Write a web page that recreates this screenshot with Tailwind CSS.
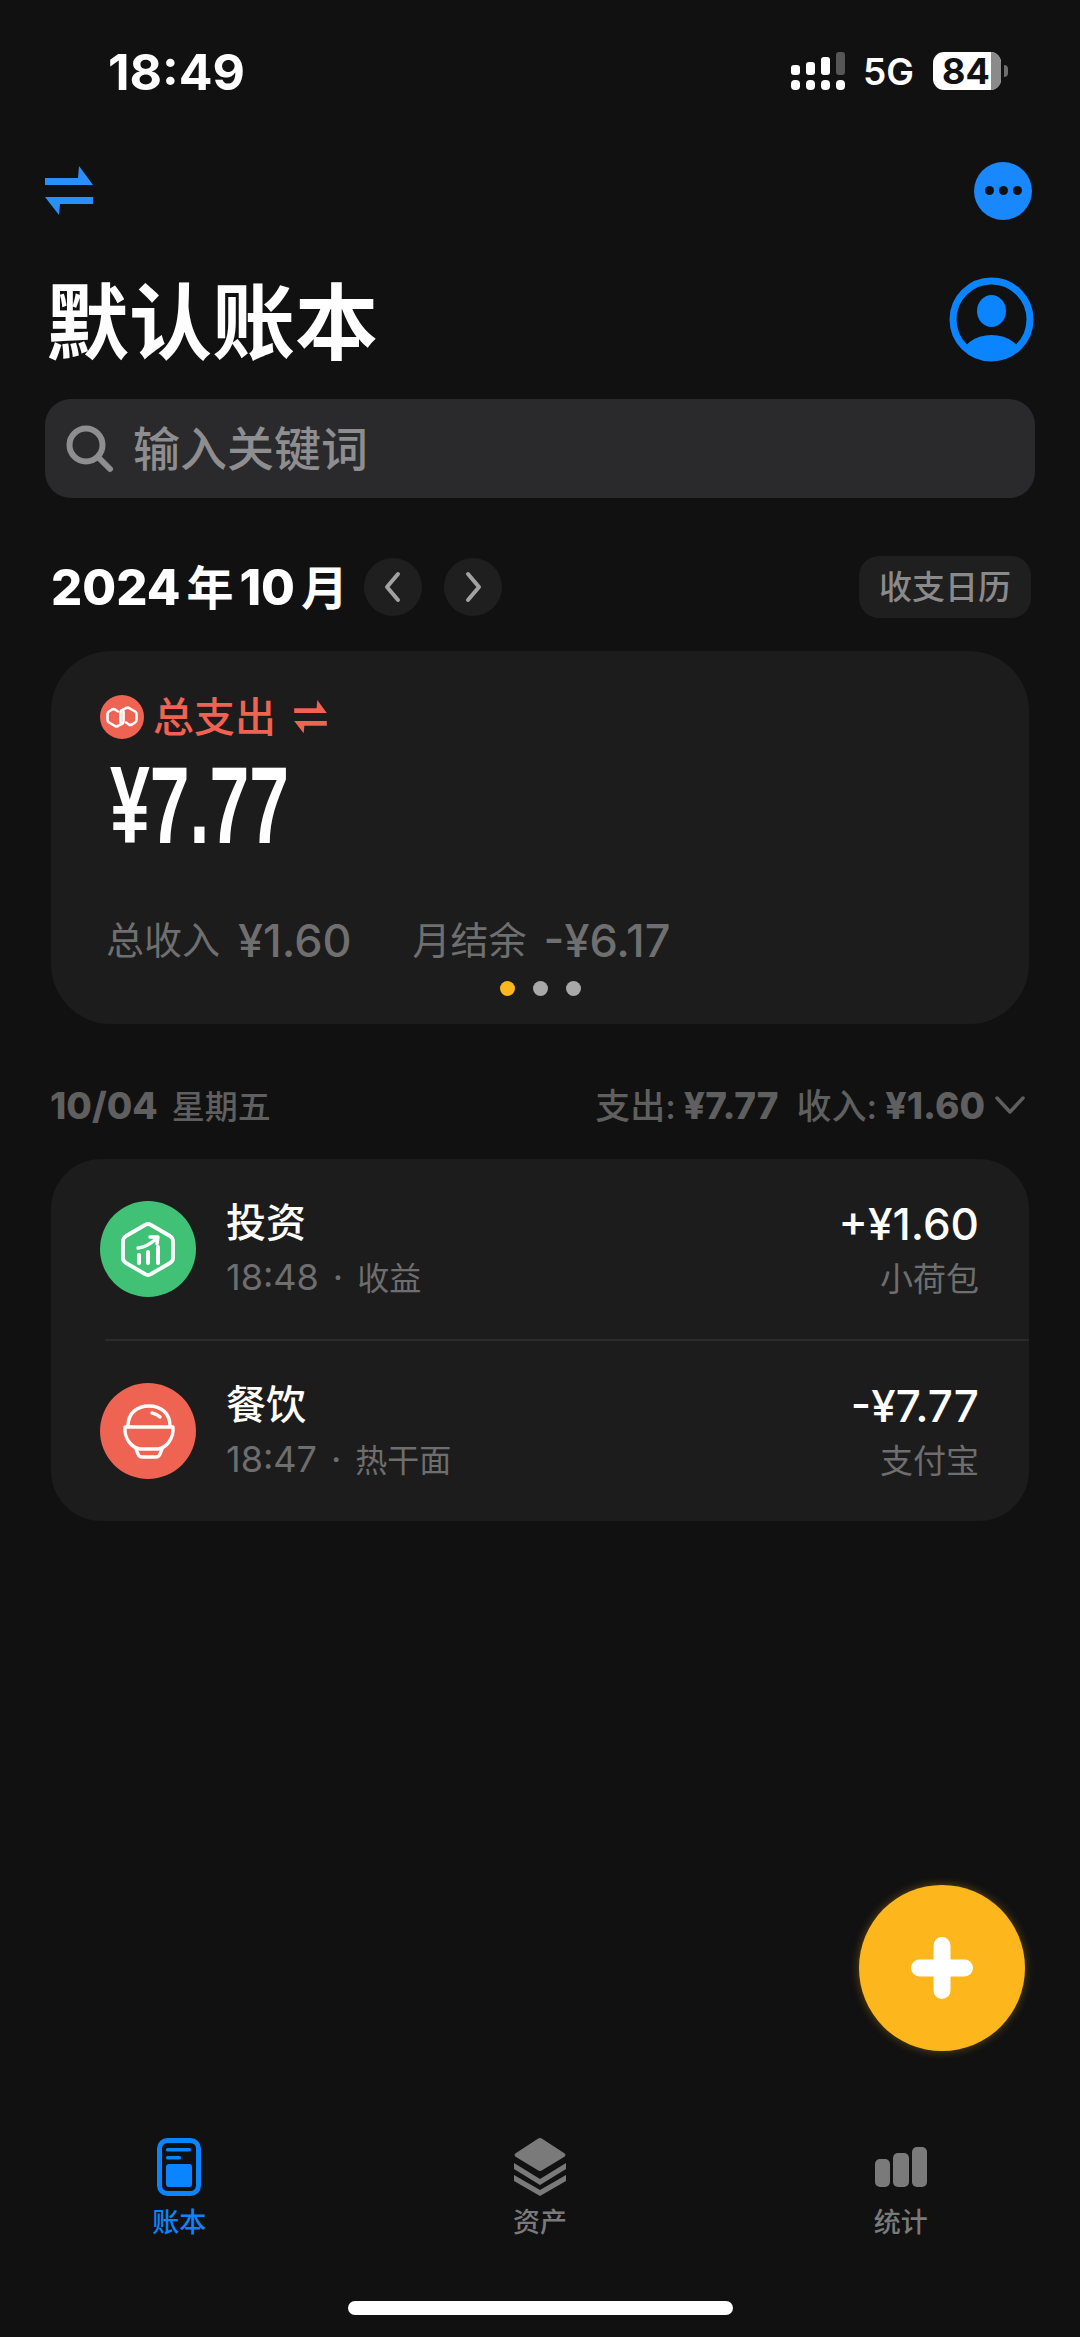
<!doctype html>
<html lang="zh-CN"><head><meta charset="utf-8">
<script src="https://cdn.jsdelivr.net/npm/@tailwindcss/browser@4"></script>
</head>
<body class="m-0">
<div class="relative w-[1080px] h-[2337px] overflow-hidden bg-[#111112] font-['Inter','Noto_Sans_CJK_SC',sans-serif] text-white flex flex-col">

  <!-- status bar -->
  <div class="h-[38px] mt-[52px] pl-[108px] pr-[72px] flex items-center justify-between">
    <span class="pt-[2px] text-[50px] font-bold leading-none">18:49</span>
    <div class="flex items-center">
      <svg width="54" height="38" viewBox="0 0 54 38" fill="#fff">
        <rect x="0" y="13" width="9" height="10" rx="3"/><rect x="15" y="10" width="9" height="13" rx="3"/><rect x="30" y="5" width="9" height="18" rx="3"/><rect x="45" y="0" width="9" height="23" rx="3" fill="#565656"/>
        <rect x="0" y="28" width="9" height="10" rx="4"/><rect x="15" y="28" width="9" height="10" rx="4"/><rect x="30" y="28" width="9" height="10" rx="4"/><rect x="45" y="28" width="9" height="10" rx="4"/>
      </svg>
      <span class="ml-[18px] text-[37px] font-semibold leading-none">5G</span>
      <div class="ml-[19px] relative w-[68px] h-[38px] rounded-[11px] bg-white flex items-center pl-[9px]">
        <span class="text-[36px] font-bold leading-none text-[#111]">84</span>
        <div class="absolute right-0 top-0 bottom-0 w-[10px] rounded-r-[11px] bg-[#8a8a8a]"></div>
      </div>
      <div class="ml-[3px] w-[4px] h-[12px] rounded-r-full bg-[#6e6e6e]"></div>
    </div>
  </div>

  <!-- top actions -->
  <div class="mt-[71px] pl-[45px] pr-[48px] flex items-center justify-between h-[59px]">
    <svg width="48" height="50" viewBox="0 0 48 50" fill="#2b8ffb"><polygon points="0,12 33,12 34,0 48,19 0,19"/><polygon points="48,31 48,38 15,38 14,49 0,31"/></svg>
    <div class="w-[58px] h-[58px] rounded-full bg-[#1a88fd] flex items-center justify-center gap-[5px]">
      <span class="w-[9px] h-[9px] rounded-full bg-[#111]"></span><span class="w-[9px] h-[9px] rounded-full bg-[#111]"></span><span class="w-[9px] h-[9px] rounded-full bg-[#111]"></span>
    </div>
  </div>

  <!-- title -->
  <div class="mt-[57px] pl-[46px] pr-[46px] flex items-center justify-between h-[85px]">
    <h1 class="pt-[8px] text-[83px] font-bold leading-none">默认账本</h1>
    <svg width="85" height="85" viewBox="0 0 85 85">
      <defs><clipPath id="av"><circle cx="42.5" cy="42.5" r="36"/></clipPath></defs>
      <circle cx="42.5" cy="42.5" r="38.5" fill="none" stroke="#0a84ff" stroke-width="7"/>
      <ellipse cx="42.5" cy="34" rx="14.5" ry="16" fill="#0a84ff"/>
      <ellipse cx="42.5" cy="82" rx="31" ry="24" fill="#0a84ff" clip-path="url(#av)"/>
    </svg>
  </div>

  <!-- search -->
  <div class="mt-[37px] mx-[45px] h-[99px] rounded-[26px] bg-[#2a2a2d] flex items-center pl-[21px]">
    <svg width="48" height="48" viewBox="0 0 48 48" fill="none" stroke="#8e8e90" stroke-width="6" stroke-linecap="round"><circle cx="20" cy="20" r="16.5"/><path d="M32 32 L44 44"/></svg>
    <span class="ml-[19px] text-[47px] font-medium leading-none text-[#8e8e90]">输入关键词</span>
  </div>

  <!-- month row -->
  <div class="mt-[58px] ml-[51px] mr-[49px] h-[62px] flex items-center">
    <span class="text-[49px] font-extrabold leading-none">2024<span class="mx-[6px] font-bold text-[47px]">年</span>10<span class="ml-[6px] font-bold text-[47px]">月</span></span>
    <div class="ml-[16px] w-[58px] h-[58px] rounded-full bg-[#1f1f1f] flex items-center justify-center">
      <svg width="20" height="32" viewBox="0 0 20 32" fill="none" stroke="#a2a2a2" stroke-width="4" stroke-linecap="round" stroke-linejoin="round"><path d="M15 3 L4 16 L15 29"/></svg>
    </div>
    <div class="ml-[22px] w-[58px] h-[58px] rounded-full bg-[#1f1f1f] flex items-center justify-center">
      <svg width="20" height="32" viewBox="0 0 20 32" fill="none" stroke="#a2a2a2" stroke-width="4" stroke-linecap="round" stroke-linejoin="round"><path d="M5 3 L16 16 L5 29"/></svg>
    </div>
    <div class="ml-auto w-[172px] h-[62px] rounded-[20px] bg-[#1f1f1f] flex items-center justify-center text-[33px] leading-none font-medium text-[#8a8a8a]">收支日历</div>
  </div>

  <!-- summary card -->
  <div class="mt-[33px] mx-[51px] h-[373px] rounded-[60px] bg-[#1c1c1c] pl-[49px] flex flex-col">
    <div class="mt-[44px] h-[44px] flex items-center">
      <svg width="44" height="44" viewBox="0 0 44 44" fill="none"><circle cx="22" cy="22" r="22" fill="#ee6352"/><path d="M18 16.500 L15 14.500 Q13.500 13.700 12 14.500 L9 16.500 Q7.500 17.500 7.500 19 V25 Q7.500 26.500 9 27.500 L15 31 Q16.500 31.800 18 31 L21 29.200" stroke="#fff" stroke-width="2.6" stroke-linecap="round" stroke-linejoin="round"/><path d="M26 27.500 L29 29.500 Q30.500 30.300 32 29.500 L35 27.500 Q36.500 26.500 36.500 25 V19 Q36.500 17.500 35 16.500 L29 13 Q27.500 12.200 26 13 L23 14.800" stroke="#fff" stroke-width="2.6" stroke-linecap="round" stroke-linejoin="round"/><path d="M23.500 17 V26 Q23.500 29 21 29.200 M20.500 27 V18 Q20.500 15 23 14.800" stroke="#fff" stroke-width="2.6" stroke-linecap="round"/></svg>
      <span class="ml-[9px] text-[41px] font-medium leading-none text-[#ee6352]">总支出</span>
      <svg class="ml-[18px]" width="33" height="34" viewBox="0 0 48 50" fill="#ee6352"><polygon points="0,12 33,12 34,0 48,19 0,19"/><polygon points="48,31 48,38 15,38 14,49 0,31"/></svg>
    </div>
    <div class="mt-[20px] -ml-[39px] pl-[49px] h-[92px] flex items-center"><span class="block text-[110px] font-['Liberation_Sans'] font-bold leading-none origin-left scale-x-[0.65]">¥7.77</span></div>
    <div class="mt-[69px] -ml-[43px] pl-[49px] h-[40px] flex items-center text-[#6f6f6f] text-[38px] leading-none">
      <span>总收入</span><span class="ml-[18px] text-[45px] font-medium">¥1.60</span><span class="ml-[61px]">月结余</span><span class="ml-[17px] text-[45px] font-medium">-¥6.17</span>
    </div>
    <div class="mt-[21px] -ml-[49px] flex justify-center gap-[18px]">
      <span class="w-[15px] h-[15px] rounded-full bg-[#fdb71c]"></span><span class="w-[15px] h-[15px] rounded-full bg-[#a8a8a8]"></span><span class="w-[15px] h-[15px] rounded-full bg-[#a8a8a8]"></span>
    </div>
  </div>

  <!-- day header -->
  <div class="mt-[63px] ml-[50px] mr-[55px] h-[36px] flex items-center justify-between text-[#5f5f5f] text-[37px] leading-none">
    <span class="font-extrabold whitespace-pre">10/04<span class="ml-[14px] font-medium text-[33px]">星期五</span></span>
    <div class="flex items-center font-extrabold">
      <span class="whitespace-pre"><span class="font-medium text-[35px]">支出:</span> ¥7.77</span><span class="ml-[18px] whitespace-pre"><span class="font-medium text-[35px]">收入:</span> ¥1.60</span>
      <svg class="ml-[10px]" width="30" height="20" viewBox="0 0 30 20" fill="none" stroke="#5f5f5f" stroke-width="3.5" stroke-linecap="round" stroke-linejoin="round"><path d="M2 3 L15 17 L28 3"/></svg>
    </div>
  </div>

  <!-- list -->
  <div class="mt-[36px] mx-[51px] h-[362px] rounded-[50px] bg-[#1c1c1c] flex flex-col">
    <div class="h-[180px] pl-[49px] pr-[50px] flex items-center">
      <svg width="96" height="96" viewBox="0 0 96 96" fill="none"><circle cx="48" cy="48" r="48" fill="#41c175"/><path d="M45 24 Q48 22 51 24 L70 35 Q73 37 73 40 V57 Q73 60 70 62 L51 73 Q48 75 45 73 L26 62 Q23 60 23 57 V40 Q23 37 26 35 Z" stroke="#fff" stroke-width="3.8" stroke-linejoin="round"/><path d="M39 54 V62 M48 51 V62 M58 46 V62" stroke="#fff" stroke-width="4" stroke-linecap="round"/><path d="M38 47 Q47 46 56 38 M50 36 L58 36 L57 43" stroke="#fff" stroke-width="3.4" stroke-linecap="round" stroke-linejoin="round"/></svg>
      <div class="ml-[30px] flex flex-col">
        <span class="text-[40px] font-medium leading-none">投资</span>
        <span class="mt-[16px] text-[36px] leading-none text-[#6e6e6e] whitespace-pre">18:48<span class="mx-[14px]">·</span><span class="text-[32px]">收益</span></span>
      </div>
      <div class="ml-auto flex flex-col items-end">
        <span class="text-[44px] leading-none font-medium">+¥1.60</span>
        <span class="mt-[17px] text-[33px] leading-none text-[#6e6e6e]">小荷包</span>
      </div>
    </div>
    <div class="ml-[54px] h-[2px] bg-[#2b2b2b]"></div>
    <div class="h-[180px] pl-[49px] pr-[50px] flex items-center">
      <svg width="96" height="96" viewBox="0 0 96 96" fill="none" stroke="#fff" stroke-width="3.4" stroke-linecap="round" stroke-linejoin="round"><circle cx="48" cy="48" r="48" fill="#ee6352" stroke="none"/><path d="M28 43 C28 30 37 23 49 23 C61 23 70 30 70 43"/><path d="M25 44 H73 C74 56 66 65 58 66 H40 C32 65 24 56 25 44 Z"/><path d="M36 66 L38 71 Q39 74 42 74 H56 Q59 74 60 71 L62 66"/><path d="M52 30 Q57 31 60 34"/></svg>
      <div class="ml-[30px] flex flex-col">
        <span class="text-[40px] font-medium leading-none">餐饮</span>
        <span class="mt-[16px] text-[36px] leading-none text-[#6e6e6e] whitespace-pre">18:47<span class="mx-[14px]">·</span><span class="text-[32px]">热干面</span></span>
      </div>
      <div class="ml-auto flex flex-col items-end">
        <span class="text-[44px] leading-none font-medium">-¥7.77</span>
        <span class="mt-[17px] text-[33px] leading-none text-[#6e6e6e]">支付宝</span>
      </div>
    </div>
  </div>

  <!-- FAB -->
  <div class="absolute left-[859px] top-[1885px] w-[166px] h-[166px] rounded-full bg-[#fdb71c] shadow-[0_0_10px_rgba(253,183,28,0.35)] flex items-center justify-center">
    <svg width="62" height="62" viewBox="0 0 62 62" fill="none" stroke="#fff" stroke-width="17" stroke-linecap="round"><path d="M31 8.5 V53.5 M8.5 31 H53.5"/></svg>
  </div>

  <!-- tab bar -->
  <div class="mt-auto grid grid-cols-3 h-[99px] -mx-px">
    <div class="flex flex-col items-center text-[#0a84ff]">
      <svg width="44" height="58" viewBox="0 0 44 58" fill="#0a84ff"><rect x="2.5" y="2.5" width="39" height="53" rx="8" fill="none" stroke="#0a84ff" stroke-width="5"/><rect x="9" y="10" width="25" height="3.5" rx="1.5"/><rect x="9" y="18" width="15" height="3.5" rx="1.5"/><rect x="9" y="26" width="26" height="23" rx="3"/></svg>
      <span class="mt-[13px] text-[27px] font-medium leading-none">账本</span>
    </div>
    <div class="flex flex-col items-center text-[#7a7a7a]">
      <svg width="52" height="58" viewBox="0 0 52 58" fill="#7a7a7a"><path d="M23.500 1 Q26 -1 28.500 1 L50 15 Q53 17 50 19 L28.500 32 Q26 34 23.500 32 L2 19 Q-1 17 2 15 Z"/><path d="M0 25 L26 41 L52 25 V31 L26 47 L0 31 Z"/><path d="M0 37 L26 52 L52 37 V43 L26 58 L0 43 Z"/></svg>
      <span class="mt-[13px] text-[27px] font-medium leading-none">资产</span>
    </div>
    <div class="flex flex-col items-center text-[#7a7a7a]">
      <div class="h-[58px] flex items-end gap-[3px] pb-[9px]">
        <span class="w-[15px] h-[28px] rounded-[5px] bg-[#7a7a7a]"></span><span class="w-[16px] h-[34px] rounded-[5px] bg-[#7a7a7a]"></span><span class="w-[15px] h-[40px] rounded-[5px] bg-[#7a7a7a]"></span>
      </div>
      <span class="mt-[13px] text-[27px] font-medium leading-none">统计</span>
    </div>
  </div>

  <!-- home indicator -->
  <div class="mt-[64px] mb-[22px] mx-auto w-[385px] h-[14px] rounded-full bg-white"></div>
</div>
</body></html>
